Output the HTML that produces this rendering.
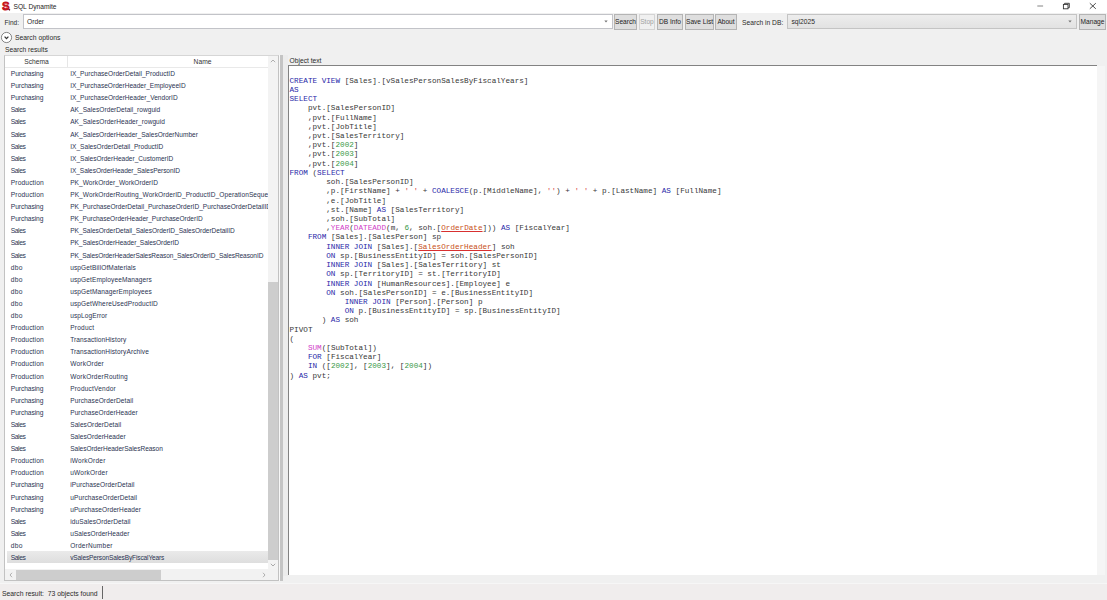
<!DOCTYPE html>
<html><head><meta charset="utf-8"><title>SQL Dynamite</title>
<style>
*{box-sizing:border-box;margin:0;padding:0}
html,body{width:1107px;height:600px;overflow:hidden;background:#f0f0f0;font-family:"Liberation Sans",sans-serif;font-size:6.7px;color:#2a2a2a}
.abs{position:absolute}
#title{left:0;top:0;width:1107px;height:13px;background:#fff}
#title .t{left:13.5px;top:2px;font-size:6.65px;line-height:9px;color:#222}
.lbl{line-height:9px;white-space:nowrap}
.btn{top:14px;height:16px;border:1px solid #b4b4b4;background:#dedede;text-align:center;line-height:14px;white-space:nowrap;font-size:6.6px;color:#222}
.inp{background:#fff;border:1px solid #c2c3c8;height:15px;top:14px}
#list{left:4px;top:55px;width:275px;height:526px;background:#fff;border:1px solid #c2c2c2;border-top-color:#d6d6d6;overflow:hidden}
#hdr{left:0;top:0;width:263px;height:12px;background:#fff;border-bottom:1px solid #e9e9e9;color:#333;overflow:hidden}
.r{position:absolute;left:2px;width:261px;height:12.1px;line-height:13.1px;color:#2b3452;white-space:nowrap;overflow:hidden}
.r .c1{position:absolute;left:3.8px}
.r .c2{position:absolute;left:63.2px;width:197.8px;overflow:hidden;font-size:6.55px}
.r.sel{background:linear-gradient(#eaeaea,#dedede)}
#code{left:288px;top:65px;width:809px;height:510px;background:#fff;border-top:1px solid #828282;border-left:1px solid #828282;font-family:"Liberation Mono",monospace;font-size:7.67px;color:#383838;overflow:hidden}
.l{height:9.22px;line-height:9.22px;white-space:pre}
.k{color:#2828a8}.f{color:#d040c8}.n{color:#3c9a4a}.s{color:#d84848}.u{color:#c85020;text-decoration:underline;text-decoration-color:#d83030;text-underline-offset:1px}
</style></head><body>
<div id="title" class="abs">
<svg class="abs" style="left:0;top:0" width="13" height="13" viewBox="0 0 13 13"><text x="2.2" y="9.9" font-family="Liberation Sans,sans-serif" font-weight="bold" font-size="10.6" fill="#c4141e" stroke="#c4141e" stroke-width="1.1" stroke-linejoin="round">S</text><path d="M4 4.1C5 3.5 6.4 3.5 7.4 4M4.4 6.4C5.6 6.8 6.8 7 7.8 7.7" fill="none" stroke="#f08a8a" stroke-width="0.7"/><path d="M8.6 9.2l1.4 1.1" stroke="#6a0a10" stroke-width="1.3"/></svg>
<div class="abs t lbl">SQL Dynamite</div>
<svg class="abs" style="left:1030px;top:0" width="77" height="13" viewBox="0 0 77 13"><path d="M7.3 6h5.8" stroke="#666" stroke-width="0.8"/><rect x="33.4" y="4.4" width="4.6" height="4.4" fill="none" stroke="#333" stroke-width="0.9"/><path d="M34.6 4.4v-1.1h4.7v4.4h-1.2" fill="none" stroke="#333" stroke-width="0.9"/><path d="M59.8 3.2l6 5.6m0-5.6l-6 5.6" stroke="#222" stroke-width="0.8"/></svg>
</div>
<div class="abs lbl" style="left:4.5px;top:17.5px;font-size:6.5px">Find:</div>
<div class="abs inp" style="left:23px;width:590px"><div class="abs lbl" style="left:3px;top:2px">Order</div><svg class="abs" style="right:4px;top:5px" width="4" height="3" viewBox="0 0 4 3"><path d="M0.3 0.5h3.4L2 2.6z" fill="#777"/></svg></div>
<div class="abs btn" style="left:614px;width:23px">Search</div>
<div class="abs btn" style="left:639px;width:16px;color:#a0a0a0;background:#f0f0f0;border-color:#d4d4d4">Stop</div>
<div class="abs btn" style="left:657px;width:26px">DB Info</div>
<div class="abs btn" style="left:685px;width:29px">Save List</div>
<div class="abs btn" style="left:715px;width:22px">About</div>
<div class="abs lbl" style="left:742px;top:17.5px">Search in DB:</div>
<div class="abs inp" style="left:787px;width:290px;background:linear-gradient(#ededed,#e2e2e2);border-color:#c4c4c4"><div class="abs lbl" style="left:3.5px;top:1.5px">sql2025</div><svg class="abs" style="right:4px;top:5px" width="4" height="3" viewBox="0 0 4 3"><path d="M0.3 0.5h3.4L2 2.6z" fill="#777"/></svg></div>
<div class="abs btn" style="left:1079px;width:27px">Manage</div>

<svg class="abs" style="left:0px;top:30.5px" width="13" height="13" viewBox="0 0 13 13"><circle cx="6.5" cy="6.5" r="5.1" fill="#fff" stroke="#555" stroke-width="0.7"/><path d="M4.6 5.6l1.9 2l1.9-2" fill="none" stroke="#333" stroke-width="1.25"/></svg>
<div class="abs lbl" style="left:15px;top:33px;font-size:6.8px">Search options</div>
<div class="abs lbl" style="left:5px;top:45px">Search results</div>

<div id="list" class="abs">
<div id="hdr" class="abs"><div class="abs lbl" style="left:1px;width:61px;text-align:center;top:1px">Schema</div><div class="abs" style="left:62px;top:0;width:1px;height:11px;background:#e6e6e6"></div><div class="abs lbl" style="left:62.5px;width:270px;text-align:center;top:1px">Name</div></div>
<div class="abs" style="left:263px;top:0;width:10px;height:513px;background:#f3f3f3"></div>
<div class="abs" style="left:263px;top:225.5px;width:10px;height:278.5px;background:#cdcdcd"></div>
<svg class="abs" style="left:265.2px;top:2.8px" width="6" height="4" viewBox="0 0 6 4"><path d="M0.8 3.2L3 1l2.2 2.2" fill="none" stroke="#a6a6a6" stroke-width="0.9"/></svg>
<svg class="abs" style="left:265.2px;top:506.5px" width="6" height="4" viewBox="0 0 6 4"><path d="M0.8 0.8L3 3l2.2-2.2" fill="none" stroke="#a0a0a0" stroke-width="0.9"/></svg>
<div class="abs" style="left:0;top:513px;width:273px;height:11px;background:#f2f2f2"></div>
<div class="abs" style="left:11px;top:513.5px;width:145px;height:10px;background:#cdcdcd"></div>
<svg class="abs" style="left:4px;top:515.5px" width="4" height="6" viewBox="0 0 4 6"><path d="M3 0.8L1 3l2 2.2" fill="none" stroke="#a8a8a8" stroke-width="0.9"/></svg>
<svg class="abs" style="left:256.5px;top:515.5px" width="4" height="6" viewBox="0 0 4 6"><path d="M1 0.8L3 3L1 5.2" fill="none" stroke="#a8a8a8" stroke-width="0.9"/></svg>
<div id="rows">
<div class="r" style="top:11.00px"><span class="c1" style="letter-spacing:-0.097px">Purchasing</span><span class="c2" style="letter-spacing:0.034px">IX_PurchaseOrderDetail_ProductID</span></div>
<div class="r" style="top:23.10px"><span class="c1" style="letter-spacing:-0.097px">Purchasing</span><span class="c2" style="letter-spacing:0.015px">IX_PurchaseOrderHeader_EmployeeID</span></div>
<div class="r" style="top:35.20px"><span class="c1" style="letter-spacing:-0.097px">Purchasing</span><span class="c2" style="letter-spacing:0.028px">IX_PurchaseOrderHeader_VendorID</span></div>
<div class="r" style="top:47.30px"><span class="c1" style="letter-spacing:-0.427px">Sales</span><span class="c2" style="letter-spacing:0.048px">AK_SalesOrderDetail_rowguid</span></div>
<div class="r" style="top:59.40px"><span class="c1" style="letter-spacing:-0.427px">Sales</span><span class="c2" style="letter-spacing:0.047px">AK_SalesOrderHeader_rowguid</span></div>
<div class="r" style="top:71.50px"><span class="c1" style="letter-spacing:-0.427px">Sales</span><span class="c2" style="letter-spacing:0.022px">AK_SalesOrderHeader_SalesOrderNumber</span></div>
<div class="r" style="top:83.60px"><span class="c1" style="letter-spacing:-0.427px">Sales</span><span class="c2" style="letter-spacing:0.023px">IX_SalesOrderDetail_ProductID</span></div>
<div class="r" style="top:95.70px"><span class="c1" style="letter-spacing:-0.427px">Sales</span><span class="c2" style="letter-spacing:0.004px">IX_SalesOrderHeader_CustomerID</span></div>
<div class="r" style="top:107.80px"><span class="c1" style="letter-spacing:-0.427px">Sales</span><span class="c2" style="letter-spacing:-0.059px">IX_SalesOrderHeader_SalesPersonID</span></div>
<div class="r" style="top:119.90px"><span class="c1" style="letter-spacing:0.102px">Production</span><span class="c2" style="letter-spacing:0.061px">PK_WorkOrder_WorkOrderID</span></div>
<div class="r" style="top:132.00px"><span class="c1" style="letter-spacing:0.102px">Production</span><span class="c2" style="letter-spacing:0.091px">PK_WorkOrderRouting_WorkOrderID_ProductID_OperationSequence</span></div>
<div class="r" style="top:144.10px"><span class="c1" style="letter-spacing:-0.097px">Purchasing</span><span class="c2" style="letter-spacing:0.024px">PK_PurchaseOrderDetail_PurchaseOrderID_PurchaseOrderDetailID</span></div>
<div class="r" style="top:156.20px"><span class="c1" style="letter-spacing:-0.097px">Purchasing</span><span class="c2" style="letter-spacing:-0.009px">PK_PurchaseOrderHeader_PurchaseOrderID</span></div>
<div class="r" style="top:168.30px"><span class="c1" style="letter-spacing:-0.427px">Sales</span><span class="c2" style="letter-spacing:-0.021px">PK_SalesOrderDetail_SalesOrderID_SalesOrderDetailID</span></div>
<div class="r" style="top:180.40px"><span class="c1" style="letter-spacing:-0.427px">Sales</span><span class="c2" style="letter-spacing:-0.046px">PK_SalesOrderHeader_SalesOrderID</span></div>
<div class="r" style="top:192.50px"><span class="c1" style="letter-spacing:-0.427px">Sales</span><span class="c2" style="letter-spacing:-0.092px">PK_SalesOrderHeaderSalesReason_SalesOrderID_SalesReasonID</span></div>
<div class="r" style="top:204.60px"><span class="c1" style="letter-spacing:0.209px">dbo</span><span class="c2" style="letter-spacing:0.118px">uspGetBillOfMaterials</span></div>
<div class="r" style="top:216.70px"><span class="c1" style="letter-spacing:0.209px">dbo</span><span class="c2" style="letter-spacing:0.112px">uspGetEmployeeManagers</span></div>
<div class="r" style="top:228.80px"><span class="c1" style="letter-spacing:0.209px">dbo</span><span class="c2" style="letter-spacing:0.112px">uspGetManagerEmployees</span></div>
<div class="r" style="top:240.90px"><span class="c1" style="letter-spacing:0.209px">dbo</span><span class="c2" style="letter-spacing:0.125px">uspGetWhereUsedProductID</span></div>
<div class="r" style="top:253.00px"><span class="c1" style="letter-spacing:0.209px">dbo</span><span class="c2" style="letter-spacing:0.097px">uspLogError</span></div>
<div class="r" style="top:265.10px"><span class="c1" style="letter-spacing:0.102px">Production</span><span class="c2" style="letter-spacing:0.220px">Product</span></div>
<div class="r" style="top:277.20px"><span class="c1" style="letter-spacing:0.102px">Production</span><span class="c2" style="letter-spacing:0.098px">TransactionHistory</span></div>
<div class="r" style="top:289.30px"><span class="c1" style="letter-spacing:0.102px">Production</span><span class="c2" style="letter-spacing:0.105px">TransactionHistoryArchive</span></div>
<div class="r" style="top:301.40px"><span class="c1" style="letter-spacing:0.102px">Production</span><span class="c2" style="letter-spacing:0.212px">WorkOrder</span></div>
<div class="r" style="top:313.50px"><span class="c1" style="letter-spacing:0.102px">Production</span><span class="c2" style="letter-spacing:0.208px">WorkOrderRouting</span></div>
<div class="r" style="top:325.60px"><span class="c1" style="letter-spacing:-0.097px">Purchasing</span><span class="c2" style="letter-spacing:0.191px">ProductVendor</span></div>
<div class="r" style="top:337.70px"><span class="c1" style="letter-spacing:-0.097px">Purchasing</span><span class="c2" style="letter-spacing:0.103px">PurchaseOrderDetail</span></div>
<div class="r" style="top:349.80px"><span class="c1" style="letter-spacing:-0.097px">Purchasing</span><span class="c2" style="letter-spacing:0.086px">PurchaseOrderHeader</span></div>
<div class="r" style="top:361.90px"><span class="c1" style="letter-spacing:-0.427px">Sales</span><span class="c2" style="letter-spacing:0.078px">SalesOrderDetail</span></div>
<div class="r" style="top:374.00px"><span class="c1" style="letter-spacing:-0.427px">Sales</span><span class="c2" style="letter-spacing:0.057px">SalesOrderHeader</span></div>
<div class="r" style="top:386.10px"><span class="c1" style="letter-spacing:-0.427px">Sales</span><span class="c2" style="letter-spacing:-0.034px">SalesOrderHeaderSalesReason</span></div>
<div class="r" style="top:398.20px"><span class="c1" style="letter-spacing:0.102px">Production</span><span class="c2" style="letter-spacing:0.204px">iWorkOrder</span></div>
<div class="r" style="top:410.30px"><span class="c1" style="letter-spacing:0.102px">Production</span><span class="c2" style="letter-spacing:0.215px">uWorkOrder</span></div>
<div class="r" style="top:422.40px"><span class="c1" style="letter-spacing:-0.097px">Purchasing</span><span class="c2" style="letter-spacing:0.085px">iPurchaseOrderDetail</span></div>
<div class="r" style="top:434.50px"><span class="c1" style="letter-spacing:-0.097px">Purchasing</span><span class="c2" style="letter-spacing:0.106px">uPurchaseOrderDetail</span></div>
<div class="r" style="top:446.60px"><span class="c1" style="letter-spacing:-0.097px">Purchasing</span><span class="c2" style="letter-spacing:0.064px">uPurchaseOrderHeader</span></div>
<div class="r" style="top:458.70px"><span class="c1" style="letter-spacing:-0.427px">Sales</span><span class="c2" style="letter-spacing:0.095px">iduSalesOrderDetail</span></div>
<div class="r" style="top:470.80px"><span class="c1" style="letter-spacing:-0.427px">Sales</span><span class="c2" style="letter-spacing:0.057px">uSalesOrderHeader</span></div>
<div class="r" style="top:482.90px"><span class="c1" style="letter-spacing:0.209px">dbo</span><span class="c2" style="letter-spacing:0.224px">OrderNumber</span></div>
<div class="r sel" style="top:495.00px"><span class="c1" style="letter-spacing:-0.427px">Sales</span><span class="c2" style="letter-spacing:-0.131px">vSalesPersonSalesByFiscalYears</span></div>
</div>
</div>
<div class="abs" style="left:279px;top:55px;width:1px;height:526px;background:#f8f8f8"></div><div class="abs" style="left:280px;top:55px;width:3px;height:526px;background:#c4c4c4"></div>
<div class="abs" style="left:283px;top:55px;width:5px;height:521px;background:#ececec"></div>
<div class="abs lbl" style="left:289.5px;top:56px">Object text</div>
<div id="code" class="abs"><div style="padding:10.7px 0 0 0.5px">
<div class="l"><span class="k">CREATE VIEW</span> [Sales].[vSalesPersonSalesByFiscalYears]</div>
<div class="l"><span class="k">AS</span></div>
<div class="l"><span class="k">SELECT</span></div>
<div class="l">    pvt.[SalesPersonID]</div>
<div class="l">    ,pvt.[FullName]</div>
<div class="l">    ,pvt.[JobTitle]</div>
<div class="l">    ,pvt.[SalesTerritory]</div>
<div class="l">    ,pvt.[<span class="n">2002</span>]</div>
<div class="l">    ,pvt.[<span class="n">2003</span>]</div>
<div class="l">    ,pvt.[<span class="n">2004</span>]</div>
<div class="l"><span class="k">FROM</span> (<span class="k">SELECT</span></div>
<div class="l">        soh.[SalesPersonID]</div>
<div class="l">        ,p.[FirstName] + <span class="s">' '</span> + <span class="k">COALESCE</span>(p.[MiddleName], <span class="s">''</span>) + <span class="s">' '</span> + p.[LastName] <span class="k">AS</span> [FullName]</div>
<div class="l">        ,e.[JobTitle]</div>
<div class="l">        ,st.[Name] <span class="k">AS</span> [SalesTerritory]</div>
<div class="l">        ,soh.[SubTotal]</div>
<div class="l">        ,<span class="f">YEAR</span>(<span class="f">DATEADD</span>(m, <span class="n">6</span>, soh.[<span class="u">OrderDate</span>])) <span class="k">AS</span> [FiscalYear]</div>
<div class="l">    <span class="k">FROM</span> [Sales].[SalesPerson] sp</div>
<div class="l">        <span class="k">INNER JOIN</span> [Sales].[<span class="u">SalesOrderHeader</span>] soh</div>
<div class="l">        <span class="k">ON</span> sp.[BusinessEntityID] = soh.[SalesPersonID]</div>
<div class="l">        <span class="k">INNER JOIN</span> [Sales].[SalesTerritory] st</div>
<div class="l">        <span class="k">ON</span> sp.[TerritoryID] = st.[TerritoryID]</div>
<div class="l">        <span class="k">INNER JOIN</span> [HumanResources].[Employee] e</div>
<div class="l">        <span class="k">ON</span> soh.[SalesPersonID] = e.[BusinessEntityID]</div>
<div class="l">            <span class="k">INNER JOIN</span> [Person].[Person] p</div>
<div class="l">            <span class="k">ON</span> p.[BusinessEntityID] = sp.[BusinessEntityID]</div>
<div class="l">       ) <span class="k">AS</span> soh</div>
<div class="l">PIVOT</div>
<div class="l">(</div>
<div class="l">    <span class="f">SUM</span>([SubTotal])</div>
<div class="l">    <span class="k">FOR</span> [FiscalYear]</div>
<div class="l">    <span class="k">IN</span> ([<span class="n">2002</span>], [<span class="n">2003</span>], [<span class="n">2004</span>])</div>
<div class="l">) <span class="k">AS</span> pvt;</div>
</div></div>
<div class="abs" style="left:1097px;top:66px;width:7.5px;height:509px;background:#f5f5f5"></div>
<div class="abs" style="left:0;top:583px;width:1107px;height:1px;background:#f6f6f6"></div><div class="abs" style="left:0;top:584px;width:1107px;height:16px;background:#f0eded"></div>
<div class="abs lbl" style="left:2px;top:589px;font-size:6.8px">Search result:&nbsp; 73 objects found</div>
<div class="abs" style="left:102px;top:586px;width:1px;height:13px;background:#666"></div>
</body></html>
